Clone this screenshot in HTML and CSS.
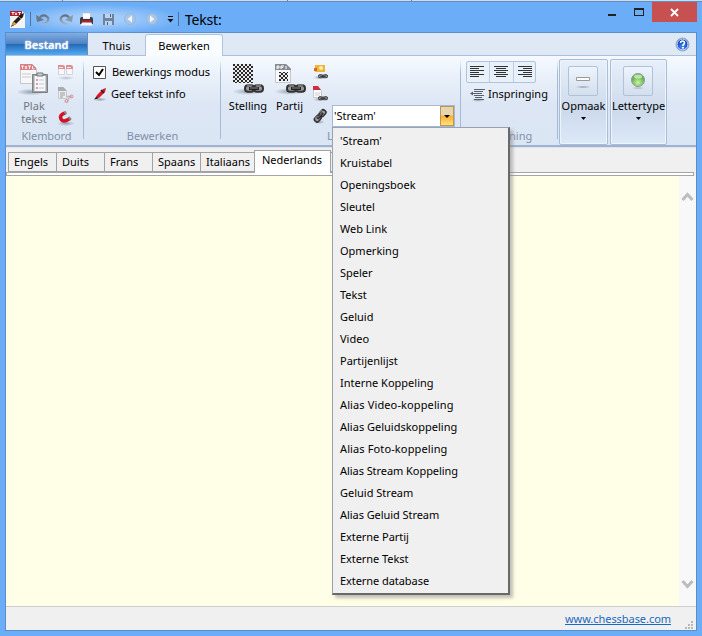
FILE: index.html
```html
<!DOCTYPE html>
<html lang="nl">
<head>
<meta charset="utf-8">
<title>Tekst:</title>
<link rel="stylesheet" href="styles.css">
</head>
<body>
<svg class="defs" width="0" height="0">
  <defs>
    <radialGradient id="green" cx=".5" cy=".7"><stop offset="0" stop-color="#c8f5a0"/><stop offset="1" stop-color="#65b34a"/></radialGradient>
    <radialGradient id="blue" cx=".5" cy=".7"><stop offset="0" stop-color="#4694ff"/><stop offset="1" stop-color="#0b3db4"/></radialGradient>
    <linearGradient id="arrowGrey" x1="0" y1="0" x2="0" y2="1"><stop offset="0" stop-color="#5f7285"/><stop offset="1" stop-color="#a3b4c8"/></linearGradient>
    <pattern id="chess" width="4" height="4" patternUnits="userSpaceOnUse"><path fill="#e8e8e8" d="M0 0h4v4H0z"/><path fill="#2a2a2a" d="M0 0h2v2H0zM2 2h2v2H2z"/></pattern>
    <radialGradient id="shade"><stop offset="0" stop-color="#707c8a" stop-opacity=".7"/><stop offset="1" stop-color="#8090a0" stop-opacity="0"/></radialGradient>
    <symbol id="chain" viewBox="0 0 20 9" preserveAspectRatio="none"><rect x="1" y="1.200" width="9" height="6.600" rx="3" fill="#9a9a9a" stroke="#333" stroke-width="2"/><rect x="10" y="1.200" width="9" height="6.600" rx="3" fill="#9a9a9a" stroke="#333" stroke-width="2"/><path d="M5 4.500h10" stroke="#222" stroke-width="3"/><path d="M6 4h8M3 1.200h5M12 1.200h5" stroke="#aaa" stroke-width=".8"/></symbol>
  </defs>
</svg>
<div class="edge"><i></i><i></i><i></i></div>
<header class="titlebar">
  <div class="quick">
    <svg width="17" height="19"><path d="M1 1h12l3 3v14H1z" fill="#f6f4f0"/><path d="M1 1h12v5H1z" fill="#b31f2c"/><path d="M2.500 2.500h3M4 2.500V5M6 2.500L8 5M8 2.500L6 5M9 2.500h3M10.500 2.500V5" stroke="#fff" fill="none" stroke-width=".9"/><path d="M2 17l2-5 7-7 4-2-1 4-7 7z" fill="#241c1a"/><path d="M3 15l2-3 2 2zM10 7l2 2" fill="#d8a64a" stroke="#d8a64a" stroke-width=".7"/></svg>
    <i class="bar"></i>
    <svg width="14" height="13"><path d="M3 6Q6 1 10 3t1 6Q9 11 5 11" fill="none" stroke="url(#arrowGrey)" stroke-width="2.200"/><path d="M0 2l1 7 7-2z" fill="#65788c"/></svg>
    <svg width="14" height="13"><path d="M11 6Q8 1 4 3T3 9q2 2 5 2" fill="none" stroke="url(#arrowGrey)" stroke-width="2.200"/><path d="M14 2l-1 7-7-2z" fill="#8799ad"/></svg>
    <svg width="15" height="15"><path d="M3.500 1h8v6h-8z" fill="#fff" stroke="#abc" stroke-width=".6"/><path d="M1 7q0-2 2-2h1v2h7V5h1q2 0 2 2v5H1z" fill="#3a3a3f"/><path d="M3 8.500h9l.5 2h-10z" fill="#d51620"/><path d="M3 10.500h9.500l1 3H1.500z" fill="#f4f6fa"/></svg>
    <svg width="13" height="13"><path d="M1 1h11v11H1z" fill="#6d839e"/><path d="M3 1h7v4H3zM3 8h7v4H3z" fill="#bdd3ed"/><path d="M8 1h1v3H8zM5 9h1v3H5z" fill="#48617f"/></svg>
    <svg width="14" height="14"><circle cx="7" cy="7" r="5.500" fill="#a9c5e6" stroke="#94b7e0"/><path d="M9 3.500v7L4.500 7z" fill="#f0f6fd"/></svg>
    <svg width="14" height="14"><circle cx="7" cy="7" r="5.500" fill="#a9c5e6" stroke="#94b7e0"/><path d="M5 3.500v7L9.500 7z" fill="#f0f6fd"/></svg>
    <svg class="more" width="7" height="9"><path d="M1 1.500h5" stroke="#111"/><path d="M.5 4h6L3.500 7.500z" fill="#111"/></svg>
    <i class="bar"></i>
    <span class="caption">Tekst:</span>
  </div>
  <div class="controls">
    <i class="min"></i><i class="max"></i>
    <span class="close"><svg width="9" height="9"><path d="M1 1l7 7M8 1L1 8" stroke="#fff" stroke-width="1.800"/></svg></span>
  </div>
</header>
<main class="window">
  <nav class="tabs">
    <b class="file">Bestand</b><span class="home">Thuis</span><span class="active">Bewerken</span>
    <svg class="help" width="15" height="15"><circle cx="7.500" cy="7.500" r="6.500" fill="url(#blue)" stroke="#91a7c8"/><circle cx="7.500" cy="7.500" r="5.500" fill="none" stroke="#eaf3ff"/><path d="M5.500 6q0-2 2-2t2 2q0 1-1.500 2v1" fill="none" stroke="#fff" stroke-width="1.600"/><path d="M7 10h2v1.500H7z" fill="#fff"/></svg>
  </nav>
  <section class="ribbon">
    <div class="group clip">
      <div class="tools">
        <div class="big disabled">
          <svg width="32" height="34"><ellipse cx="13" cy="29" rx="15" ry="3.500" fill="url(#shade)"/><path d="M2.500 1.500h12l4 4v15h-16z" fill="#f7f7f7" stroke="#c5c8cc"/><path d="M2 1h12l4 4v2H2z" fill="#d98084"/><path d="M3 3h3M4.500 3v3M7 3l2 3M9 3L7 6M10 3h3M11.500 3v3M14.500 3v3h2" stroke="#fbeaea" fill="none"/><path d="M4 11h9M4 14h9" stroke="#ccc"/><path d="M14.500 11.500h15v18h-15z" fill="#a0a3a8" stroke="#7d8085"/><path d="M16.500 13h11v15h-11z" fill="#f4f7fb"/><path d="M19 10h6v3h-6z" fill="#c8ccd0" stroke="#777"/><path d="M18 17h2M18 21h2M18 25h2" stroke="#d98084" stroke-width="1.500"/><path d="M21 17h5M21 21h5M21 25h5" stroke="#c5c9cf"/></svg>
          <span>Plak<br>tekst</span>
        </div>
        <div class="small clip-icons">
          <svg width="18" height="17"><ellipse cx="9" cy="14" rx="9" ry="2" fill="url(#shade)" opacity=".6"/><path d="M1.500 1.500h6v9h-6zM9.500 1.500h6v9h-6z" fill="#f7f9fc" stroke="#d3d5da"/><path d="M1 1h5l2 2v2H1zM9 1h5l2 2v2H9z" fill="#df8c92"/><path d="M2 3.500h4M10 3.500h4" stroke="#fbeaea"/></svg>
          <svg width="18" height="18"><path d="M1.500 1.500h5l3 3v8h-8z" fill="#eee" stroke="#c5c8cc"/><path d="M1 1h5l3 3v1H1z" fill="#a9adb3"/><path d="M3 7h5M3 9h5M3 11h3" stroke="#999"/><path d="M9 10.500h6M10 16l3-6" stroke="#bbb" stroke-width="1.400"/><circle cx="9.500" cy="15" r="1.500" fill="none" stroke="#d98890"/><circle cx="14.500" cy="10.500" r="1.500" fill="none" stroke="#d98890"/></svg>
          <svg width="18" height="18"><ellipse cx="9" cy="14.500" rx="9" ry="2.500" fill="url(#shade)"/><path d="M8 4Q2 6 4 10t8 0l1-1" fill="none" stroke="#d11325" stroke-width="3.600"/><path d="M7.500 4.200l2-.8M12 10l1.500-1.500" stroke="#888" stroke-width="3.200"/></svg>
        </div>
      </div>
      <footer>Klembord</footer>
    </div>
    <div class="group edit">
      <div class="check"><svg width="13" height="13"><path d="M.5.5h12v12H.5z" fill="#fff" stroke="#555"/><path d="M3 6l3 3 4-6" fill="none" stroke="#000" stroke-width="2"/></svg><span>Bewerkings modus</span></div>
      <div class="check info"><svg width="15" height="16"><ellipse cx="7" cy="13.500" rx="7" ry="2" fill="url(#shade)"/><path d="M2 13l2-4 6-6 3-1-1 4-6 6z" fill="#d81925"/><path d="M8 4l3 3" stroke="#222" stroke-width="1.500"/><path d="M1 13.500l2.500-3 1.500 2z" fill="#222"/></svg><span>Geef tekst info</span></div>
      <footer>Bewerken</footer>
    </div>
    <div class="group links">
      <div class="tools">
        <div class="big position"><svg width="32" height="34"><ellipse cx="15" cy="28.500" rx="16" ry="3.500" fill="url(#shade)"/><svg x="0" y="1" width="20" height="19"><path d="M0 0h20v20H0z" fill="url(#chess)"/></svg><use href="#chain" x="11" y="21" width="20" height="9"/></svg><span>Stelling</span></div>
        <div class="big gamebtn"><svg width="32" height="34"><ellipse cx="15" cy="28.500" rx="16" ry="3.500" fill="url(#shade)"/><path d="M.5 1.500h11l4 4v14H.5z" fill="#fafafa" stroke="#c5c8cc"/><path d="M0 1h11l5 5v1H0z" fill="#858b92"/><path d="M2 6V3h2v2H2M6 6V3h3M6 4.500h2M11 6V3" stroke="#fff" fill="none"/><path d="M4 9h9v9H4z" fill="url(#chess)"/><use href="#chain" x="11" y="21" width="20" height="9"/></svg><span>Partij</span></div>
        <div class="small link-icons">
          <svg width="17" height="18"><path d="M2 2h10v7H2z" fill="#edb33a"/><circle cx="8" cy="5" r="2" fill="#fff1a3"/><path d="M1 5h3v3H1z" fill="#d9682e"/><ellipse cx="7" cy="14.500" rx="7" ry="2" fill="url(#shade)"/><use href="#chain" x="5" y="11" width="10" height="4.500"/></svg>
          <svg width="17" height="18"><path d="M.5 2.500h5l3 3v7h-8z" fill="#fff" stroke="#c5c8cc"/><path d="M0 1h5l3 4H0z" fill="#cc3040"/><path d="M2 8h5M2 10h5" stroke="#ccc"/><ellipse cx="7" cy="14.500" rx="7" ry="2" fill="url(#shade)"/><use href="#chain" x="5" y="11" width="10" height="4.500"/></svg>
          <svg width="17" height="18"><ellipse cx="6" cy="15" rx="6" ry="2" fill="url(#shade)"/><use href="#chain" x="-1" y="5" width="16" height="7" transform="rotate(-48 7.500 8.500)"/></svg>
        </div>
        <div class="combo"><span>'Stream'</span><i><svg width="6" height="3"><path d="M0 0h6L3 3z"/></svg></i>
          <ul class="menu">
            <li>'Stream'</li><li>Kruistabel</li><li>Openingsboek</li><li>Sleutel</li><li>Web Link</li><li>Opmerking</li><li>Speler</li><li>Tekst</li><li>Geluid</li><li>Video</li><li>Partijenlijst</li><li>Interne Koppeling</li><li class="wide">Alias Video-koppeling</li><li>Alias Geluidskoppeling</li><li class="wide">Alias Foto-koppeling</li><li class="tight">Alias Stream Koppeling</li><li>Geluid Stream</li><li class="tight">Alias Geluid Stream</li><li class="tight">Externe Partij</li><li class="tight">Externe Tekst</li><li class="tight">Externe database</li>
          </ul>
        </div>
      </div>
      <footer>Links</footer>
    </div>
    <div class="group align">
      <div class="buttons">
        <svg width="22" height="20"><path d="M3 4.500h14M3 6.500h9M3 8.500h14M3 10.500h9M3 12.500h14M3 14.500h9" stroke="#333"/></svg><svg width="24" height="20"><path d="M4 4.500h14M6 6.500h10M4 8.500h14M6 10.500h10M4 12.500h14M6 14.500h10" stroke="#333"/></svg><svg width="22" height="20"><path d="M4 4.500h14M9 6.500h9M4 8.500h14M9 10.500h9M4 12.500h14M9 14.500h9" stroke="#333"/></svg>
      </div>
      <div class="indent"><svg width="16" height="15"><ellipse cx="8" cy="13" rx="7" ry="2" fill="url(#shade)"/><path d="M4 2.500h11M4 4.500h9M1 6.500h11M4 8.500h10M5 10.500h7M4 12.500h10" stroke="#59606a"/><path d="M0 6.500l3-2v4z" fill="#59606a"/></svg><span>Inspringing</span></div>
      <footer>Uitlijning</footer>
    </div>
    <div class="panel format"><div class="tile"><svg width="16" height="18"><path d="M1.500 5.500h13v3h-13z" fill="#fff" stroke="#999"/><ellipse cx="8" cy="15" rx="8" ry="1.500" fill="url(#shade)"/></svg></div><span>Opmaak</span><svg class="arrow" width="5" height="3"><path d="M0 0h5L2.500 3z"/></svg></div>
    <div class="panel font"><div class="tile"><svg width="16" height="18"><circle cx="8" cy="8" r="6.500" fill="url(#green)" stroke="#8b99a9"/><ellipse cx="8" cy="4.500" rx="4" ry="2" fill="#e0f5d5" opacity=".7"/><ellipse cx="8" cy="16" rx="7" ry="1" fill="url(#shade)"/></svg></div><span>Lettertype</span><svg class="arrow" width="5" height="3"><path d="M0 0h5L2.500 3z"/></svg></div>
  </section>
  <nav class="languages"><span>Engels</span><span>Duits</span><span>Frans</span><span>Spaans</span><span>Italiaans</span><span class="selected">Nederlands</span><span class="next"></span></nav>
  <div class="divider"></div>
  <div class="editor"><div class="paper"></div><div class="scroll"><svg width="13" height="11"><path d="M1.500 9l5-5.500L11.500 9" fill="none" stroke="#bdbdbd" stroke-width="3"/></svg><svg width="13" height="11"><path d="M1.500 2l5 5.500 5-5.500" fill="none" stroke="#bdbdbd" stroke-width="3"/></svg></div></div>
  <div class="status"><a>www.chessbase.com</a><svg width="10" height="10"><path d="M7 0h2v2H7zM4 3h2v2H4zM7 3h2v2H7zM1 6h2v2H1zM4 6h2v2H4zM7 6h2v2H7z" fill="#b8b8b8"/></svg></div>
</main>
</body>
</html>
```
FILE: styles.css
```css
* { box-sizing: border-box; }
body { margin: 0; width: 702px; height: 636px; overflow: hidden; background: #6badf6; color: #000; font: 11px/14px "Noto Sans", sans-serif; }
svg { display: block; flex: none; }
.defs { position: absolute; }
.edge { height: 2px; background: #d2dbe5; border-bottom: 1px solid #5b8fc9; display: flex; }
.edge i { width: 1px; height: 1px; background: #777; margin-left: 62px; }
.edge i:nth-child(2) { margin-left: 224px; }
.edge i:nth-child(3) { margin-left: 123px; }
.titlebar { height: 31px; display: flex; justify-content: space-between; }
.quick { display: flex; align-items: center; height: 34px; padding-left: 9px; background: radial-gradient(ellipse 85px 15px at 98px 17px, #a4ccfa 30%, transparent 100%); }
.quick > :nth-child(2) { margin: 0 5px 0 4px; }
.quick > :nth-child(3) { margin-right: 9px; }
.quick > :nth-child(4) { margin-right: 6px; }
.quick > :nth-child(5) { margin-right: 8px; }
.quick > :nth-child(6) { margin-right: 8px; }
.quick > :nth-child(7) { margin-right: 8px; }
.quick > :nth-child(8) { margin-right: 8px; }
.bar { width: 1px; height: 14px; background: #4c739e; }
.more { margin-right: 4px; }
.caption { margin: 2px 0 0 6px; font-size: 14px; line-height: 20px; letter-spacing: -.2px; }
.controls { display: flex; padding-right: 5px; }
.min { width: 8px; height: 2px; margin: 12px 18px 0 0; background: #222; }
.max { width: 10px; height: 8px; margin: 6px 8px 0 0; border: 1px solid #222; border-top-width: 2px; }
.close { display: flex; width: 45px; height: 20px; align-items: center; justify-content: center; background: #c75050; }
.window { margin: -1px 5px 0; width: 692px; height: 599px; border: 1px solid #588fca; background: #f0f0f0; }
.tabs { display: flex; height: 23px; background: #dfe8f5; border-bottom: 1px solid #abc0df; padding: 0 6px 0 0; }
.tabs > * { text-align: center; line-height: 25px; }
.tabs .file { width: 82px; color: #fff; background: linear-gradient(#80ade4, #5083c2 48%, #2368b4 50%, #54acf4); border-right: 1px solid #668fbf; font-weight: 600; text-shadow: 0 0 2px #fff; height: 22px; line-height: 23px; }
.home { width: 57px; }
.tabs .active { width: 78px; height: 22px; margin-top: 1px; background: #fafdff; border: 1px solid #b1c4df; border-bottom: 0; border-radius: 3px 3px 0 0; line-height: 22px; }
.help { margin: 4px 0 0 auto; }
.ribbon { height: 91px; display: flex; background: linear-gradient(#f6faff 0, #e9f0fa 25%, #dce6f4 55%, #dbe6f5 90%); border-bottom: 2px solid #a0b2ce; box-shadow: 0 1px #dce5ef; position: relative; }
.group { display: flex; flex-direction: column; position: relative; border-right: 1px solid #a8b9d5; border-image: linear-gradient(transparent 5%, #a8b9d5 20%, #a8b9d5 92%, transparent 92%) 1; }
.group footer { margin-top: auto; padding-bottom: 2px; text-align: center; color: #8190a8; line-height: 15px; }
.clip { width: 78px; }
.clip footer { padding-left: 4px; letter-spacing: -.1px; }
.edit { width: 137px; padding: 9px 0 0 9px; }
.edit footer { padding-right: 8px; }
.links { width: 240px; padding-left: 7px; }
.links footer { padding-left: 99px; text-align: left; }
.align { width: 97px; padding: 5px 0 0 5px; }
.align footer { padding-right: 5px; }
.tools { display: flex; padding-top: 7px; height: 72px; }
.big { display: flex; flex-direction: column; align-items: center; }
.big svg { margin-left: 2px; }
.big span { text-align: center; margin-top: 2px; line-height: 13px; }
.clip .big { width: 45px; padding-left: 11px; margin-right: 6px; }
.clip .big svg { margin-left: 0; }
.disabled { color: #73777e; }
.clip-icons { display: flex; flex-direction: column; gap: 5px; padding-top: 1px; }
.check { display: flex; align-items: center; gap: 6px; height: 14px; letter-spacing: -.05px; }
.check span { margin-top: -1px; }
.check.info { margin-top: 8px; gap: 3px; }
.position { width: 40px; }
.gamebtn { width: 43px; }
.link-icons { width: 18px; margin-left: 2px; }
.link-icons svg { margin-bottom: 4px; }
.combo { position: relative; height: 22px; width: 123px; margin: 42px 0 0 1px; background: #fff; border: 1px solid #a6b8d5; display: flex; justify-content: space-between; padding-left: 1px; line-height: 20px; }
.combo i { width: 14px; background: linear-gradient(#e6d5ad 0 45%, #ffae32 50%, #ffe276); border: 1px solid #c09452; display: flex; align-items: center; justify-content: center; }
.menu { position: absolute; z-index: 3; left: -1px; top: 21px; width: 178px; height: 468px; margin: 0; padding: 2px 0 0 7px; list-style: none; background: #f0f0f0; border: 1px solid #9aa4b1; border-right: 2px solid #696969; border-bottom: 2px solid #696969; box-shadow: 3px 3px 3px #8888; }
.menu li { height: 22px; line-height: 22px; white-space: nowrap; }
.menu .wide { letter-spacing: .12px; }
.menu .tight { letter-spacing: -.06px; }
.buttons { width: 70px; height: 22px; display: flex; border: 1px solid #b3c3dc; border-radius: 2px; background: #e8f0f9; }
.buttons svg + svg { border-left: 1px solid #bdcce1; }
.indent { display: flex; align-items: center; gap: 2px; padding: 2px 0 0 4px; height: 20px; }
.panel { height: 86px; margin: 3px 0 0 1px; border: 1px solid #a9bcda; box-shadow: inset 0 0 0 1px #edf4fc; border-radius: 2px; display: flex; flex-direction: column; align-items: center; background: linear-gradient(#e7effa, #cddaeb 60%, #dce9f9); }
.format { width: 49px; }
.font { width: 57px; margin-left: 2px; }
.tile { width: 30px; height: 30px; margin: 6px 0 3px; border: 1px solid #b0c1dc; border-radius: 2px; background: linear-gradient(#edf4fc, #d4dfed); display: flex; align-items: center; justify-content: center; }
.format .tile, .font .tile { position: relative; left: -1px; }
.arrow { margin-top: 4px; }
.languages { height: 25px; padding: 4px 0 0 2px; display: flex; align-items: flex-end; }
.languages span { width: 49px; height: 20px; border: 1px solid #a2a2a2; margin-right: -1px; padding-left: 5px; line-height: 18px; background: #f0f0f0; }
.languages span:nth-child(5) { width: 55px; }
.languages .selected { width: 77px; height: 23px; padding-left: 7px; background: #fff; border-bottom: 0; line-height: 18px; margin-bottom: -1px; }
.languages .next { width: 15px; }
.divider { height: 4px; margin: 0 2px 0 0; border: 1px solid #a5a5a5; background: #fff; }
.editor { display: flex; height: 430px; }
.paper { width: 673px; background: #ffffe8; }
.scroll { flex: 1; background: #f8f8f8; padding: 15px 2px 16px; display: flex; flex-direction: column; justify-content: space-between; }
.status { height: 24px; border-top: 1px solid #cfcfcf; display: flex; justify-content: flex-end; background: #f0f0f0; }
.status a { color: #1769c2; text-decoration: underline; line-height: 24px; margin-right: 13px; letter-spacing: -.05px; }
.status svg { margin: 14px 2px 0 0; }
```
